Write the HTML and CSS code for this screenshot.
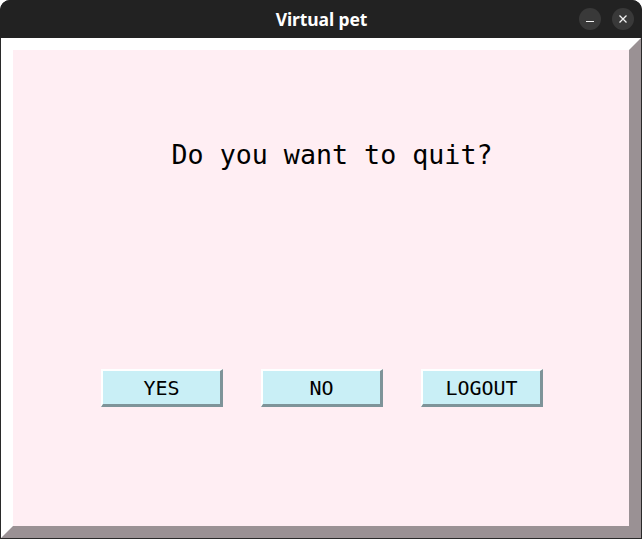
FILE: index.html
```html
<!DOCTYPE html>
<html>
<head>
<meta charset="utf-8">
<link rel="stylesheet" href="styles.css">
</head>
<body>
<div class="window">
  <div class="titlebar">
    <div class="title">Virtual pet</div>
    <div class="controls">
      <span class="ctl">
        <svg width="10" height="10" viewBox="0 0 10 10"><path d="M1 7.5H9" stroke="#f0f0f0" stroke-width="1.2"/></svg>
      </span>
      <span class="ctl">
        <svg width="10" height="10" viewBox="0 0 10 10"><path d="M1.5 1.5L8.5 8.5M8.5 1.5L1.5 8.5" stroke="#f0f0f0" stroke-width="1.3"/></svg>
      </span>
    </div>
  </div>
  <div class="client">
    <div class="frame">
      <div class="question">Do you want to quit?</div>
      <div class="buttons">
        <div class="btn">YES</div>
        <div class="btn">NO</div>
        <div class="btn">LOGOUT</div>
      </div>
    </div>
  </div>
</div>
</body>
</html>
```

FILE: styles.css
```css
html, body {
  margin: 0;
  padding: 0;
  background: #ffffff;
}
.window {
  width: 642px;
  height: 539px;
  display: flex;
  flex-direction: column;
  box-sizing: border-box;
  border-radius: 10px 10px 0 0;
  overflow: hidden;
  background: #232323;
}
.titlebar {
  height: 38px;
  flex: none;
  background: #222222;
  display: flex;
  align-items: center;
  justify-content: center;
  position: relative;
}
.title {
  color: #ffffff;
  font-family: "Noto Sans", "DejaVu Sans", sans-serif;
  font-weight: bold;
  font-size: 17.5px;
  letter-spacing: -0.1px;
  margin-left: 1px;
}
.controls {
  position: absolute;
  right: 8px;
  top: 8px;
  display: flex;
  gap: 11px;
}
.ctl {
  width: 22px;
  height: 22px;
  border-radius: 50%;
  background: #393939;
  display: flex;
  align-items: center;
  justify-content: center;
}
.client {
  flex: 1;
  background: #2a2a2a;
  padding: 0 1px 1px 1px;
  display: flex;
}
.frame {
  flex: 1;
  background: #ffeef3;
  border-style: solid;
  border-width: 12px;
  border-color: #ffffff #9a9194 #9a9194 #ffffff;
  display: flex;
  flex-direction: column;
  align-items: center;
}
.question {
  margin-top: 89px;
  font-family: "DejaVu Sans Mono", monospace;
  font-size: 26.67px;
  line-height: 31px;
  color: #000000;
  margin-left: 22px;
}
.buttons {
  margin-top: 199px;
  display: flex;
  gap: 38px;
  margin-left: 2px;
}
.btn {
  width: 122px;
  height: 38px;
  box-sizing: border-box;
  background: #c9eff6;
  border-style: solid;
  border-width: 2px 3px 3px 2px;
  border-color: #ffffff #7e9499 #7e9499 #ffffff;
  font-family: "DejaVu Sans Mono", monospace;
  font-size: 20px;
  color: #000000;
  display: flex;
  align-items: center;
  justify-content: center;
}
```
